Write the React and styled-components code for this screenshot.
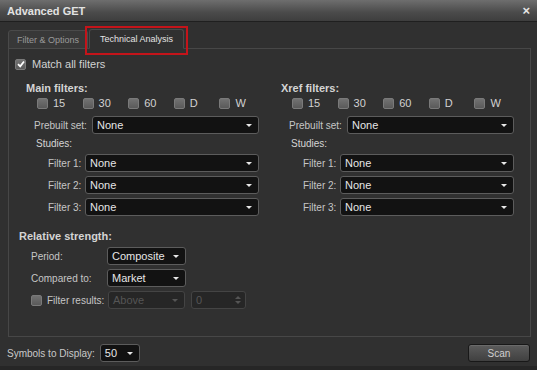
import React from "react";
import styled, { createGlobalStyle } from "styled-components";

const GlobalStyle = createGlobalStyle`
  body {
    margin: 0;
    background: #2b2b2b;
    font-family: "Liberation Sans", Arial, sans-serif;
    font-size: 10px;
    color: #c9c9c9;
  }
`;

const Window = styled.div`
  width: 537px;
  height: 370px;
  box-sizing: border-box;
  display: flex;
  flex-direction: column;
  background: #303030;
  border-bottom: 4px solid #262626;
`;

const TitleBar = styled.div`
  height: 22px;
  flex: none;
  display: flex;
  align-items: center;
  justify-content: space-between;
  padding: 0 7px 0 7px;
  background: linear-gradient(#6e6e6e, #4a4a4a 60%, #3e3e3e);
  border-bottom: 1px solid #1f1f1f;
  font-weight: bold;
  font-size: 11px;
  color: #e2e2e2;
  box-sizing: border-box;
`;

const Close = styled.span`
  font-size: 13px;
  color: #e6e6e6;
  line-height: 1;
`;

const Body = styled.div`
  flex: 1;
  display: flex;
  flex-direction: column;
  padding: 7px 7px 0 8px;
`;

const TabRow = styled.div`
  display: flex;
  align-items: flex-end;
  height: 20px;
  gap: 1px;
  margin-bottom: -1px;
  position: relative;
  z-index: 1;
`;

const Tab = styled.div`
  width: ${(p) => (p.active ? 95 : 80)}px;
  height: ${(p) => (p.active ? 20 : 19)}px;
  box-sizing: border-box;
  display: flex;
  align-items: center;
  justify-content: center;
  font-size: 9px;
  color: ${(p) => (p.active ? "#e4e4e4" : "#9a9a9a")};
  background: ${(p) => (p.active ? "#303030" : "#383838")};
  border: 1px solid #4a4a4a;
  border-bottom-color: ${(p) => (p.active ? "#303030" : "#4a4a4a")};
  border-radius: 3px 3px 0 0;
  position: relative;
`;

const Highlight = styled.div`
  position: absolute;
  left: -5px;
  top: -4px;
  right: -5px;
  bottom: -7px;
  border: 2px solid #c4141a;
  pointer-events: none;
`;

const Panel = styled.div`
  height: 289px;
  box-sizing: border-box;
  border: 1px solid #474747;
  padding: 9px 0 0 6px;
  width: 523px;
`;

const CheckRow = styled.label`
  display: flex;
  align-items: center;
  gap: ${(p) => p.gap || 6}px;
  height: 12px;
  color: ${(p) => p.color || "#d2d2d2"};
  font-size: ${(p) => p.size || 10}px;
`;

const Box = styled.span`
  width: 9px;
  height: 9px;
  flex: none;
  border: 1px solid #7a7a7a;
  border-radius: 2px;
  background: linear-gradient(#727272, #5a5a5a);
  display: flex;
  align-items: center;
  justify-content: center;
`;

const Columns = styled.div`
  display: flex;
  gap: 22px;
  margin-top: 11px;
  padding-left: 11px;
`;

const Column = styled.div`
  width: 233px;
  display: flex;
  flex-direction: column;
`;

const Heading = styled.div`
  font-weight: ${(p) => (p.plain ? "normal" : "bold")};
  font-size: ${(p) => (p.plain ? 10 : 11)}px;
  color: #d4d4d4;
  height: 14px;
  line-height: 14px;
  margin-left: ${(p) => p.indent || 0}px;
  margin-top: ${(p) => p.mt || 0}px;
`;

const Periods = styled.div`
  display: flex;
  margin: 2px 0 0 11px;
  height: 12px;
`;

const PeriodItem = styled.div`
  width: 45.6px;
  flex: none;
`;

const Row = styled.div`
  display: flex;
  align-items: center;
  height: 18px;
  margin-top: ${(p) => p.mt || 4}px;
  padding-left: ${(p) => p.indent || 0}px;
`;

const Label = styled.span`
  width: ${(p) => p.w}px;
  flex: none;
  color: #c6c6c6;
  white-space: nowrap;
`;

const Select = styled.div`
  height: 18px;
  width: ${(p) => (p.w ? p.w + "px" : "auto")};
  flex: ${(p) => (p.w ? "none" : 1)};
  box-sizing: border-box;
  display: flex;
  align-items: center;
  justify-content: space-between;
  padding: 0 6px 0 4px;
  background: ${(p) => (p.disabled ? "#262626" : "#121212")};
  border: 1px solid ${(p) => (p.disabled ? "#444" : "#5c5c5c")};
  border-radius: 3px;
  color: ${(p) => (p.disabled ? "#555" : "#e6e6e6")};
  font-size: 11px;
`;

const Caret = styled.span`
  width: 0;
  height: 0;
  border-left: 3px solid transparent;
  border-right: 3px solid transparent;
  border-top: 3px solid ${(p) => (p.dim ? "#555" : "#e8e8e8")};
`;

const Spinner = styled(Select)`
  margin-left: 6px;
  padding-right: 4px;
`;

const Arrows = styled.span`
  display: flex;
  flex-direction: column;
  gap: 2px;
  &::before,
  &::after {
    content: "";
    border-left: 3px solid transparent;
    border-right: 3px solid transparent;
  }
  &::before {
    border-bottom: 3px solid #555;
  }
  &::after {
    border-top: 3px solid #555;
  }
`;

const Relative = styled.div`
  display: flex;
  flex-direction: column;
  margin-top: 13px;
  padding-left: 4px;
`;

const Footer = styled.div`
  display: flex;
  align-items: center;
  justify-content: space-between;
  height: 18px;
  margin: 7px 0 0 -1px;
  width: 523px;
`;

const FooterLeft = styled.div`
  display: flex;
  align-items: center;
  gap: 5px;
`;

const ScanButton = styled.button`
  width: 62px;
  height: 18px;
  border: 1px solid #181818;
  border-radius: 3px;
  background: linear-gradient(#5c5c5c, #404040);
  color: #cfcfcf;
  font-family: inherit;
  font-size: 10px;
  padding: 0;
  box-shadow: inset 0 1px 0 #6a6a6a;
`;

const Check = () => (
  <svg width="8" height="8" viewBox="0 0 8 8">
    <path d="M1 4.2 L3.2 6.3 L7 1.5" fill="none" stroke="#fff" strokeWidth="1.8" />
  </svg>
);

const Dropdown = ({ value, w, disabled }) => (
  <Select w={w} disabled={disabled}>
    <span>{value}</span>
    <Caret dim={disabled} />
  </Select>
);

const FilterColumn = ({ title }) => (
  <Column>
    <Heading>{title}</Heading>
    <Periods>
      {["15", "30", "60", "D", "W"].map((p) => (
        <PeriodItem key={p}>
          <CheckRow gap={5} size={11}>
            <Box />
            {p}
          </CheckRow>
        </PeriodItem>
      ))}
    </Periods>
    <Row mt={7} indent={8}>
      <Label w={58}>Prebuilt set:</Label>
      <Dropdown value="None" />
    </Row>
    <Heading plain indent={10} mt={3}>
      Studies:
    </Heading>
    {[1, 2, 3].map((n) => (
      <Row key={n} mt={n === 1 ? 3 : 4} indent={22}>
        <Label w={37}>Filter {n}:</Label>
        <Dropdown value="None" />
      </Row>
    ))}
  </Column>
);

export default function App() {
  return (
    <>
      <GlobalStyle />
      <Window>
        <TitleBar>
          <span>Advanced GET</span>
          <Close>×</Close>
        </TitleBar>
        <Body>
          <TabRow>
            <Tab>Filter &amp; Options</Tab>
            <Tab active>
              Technical Analysis
              <Highlight />
            </Tab>
          </TabRow>
          <Panel>
            <CheckRow size={11}>
              <Box>
                <Check />
              </Box>
              Match all filters
            </CheckRow>
            <Columns>
              <FilterColumn title="Main filters:" />
              <FilterColumn title="Xref filters:" />
            </Columns>
            <Relative>
              <Heading>Relative strength:</Heading>
              <Row mt={4} indent={12}>
                <Label w={76}>Period:</Label>
                <Dropdown value="Composite" w={79} />
              </Row>
              <Row indent={12}>
                <Label w={76}>Compared to:</Label>
                <Dropdown value="Market" w={79} />
              </Row>
              <Row indent={12}>
                <Label w={77}>
                  <CheckRow gap={5} color="#c6c6c6">
                    <Box />
                    Filter results:
                  </CheckRow>
                </Label>
                <Dropdown value="Above" w={77} disabled />
                <Spinner w={55} disabled>
                  <span>0</span>
                  <Arrows />
                </Spinner>
              </Row>
            </Relative>
          </Panel>
          <Footer>
            <FooterLeft>
              <span>Symbols to Display:</span>
              <Dropdown value="50" w={40} />
            </FooterLeft>
            <ScanButton>Scan</ScanButton>
          </Footer>
        </Body>
      </Window>
    </>
  );
}
